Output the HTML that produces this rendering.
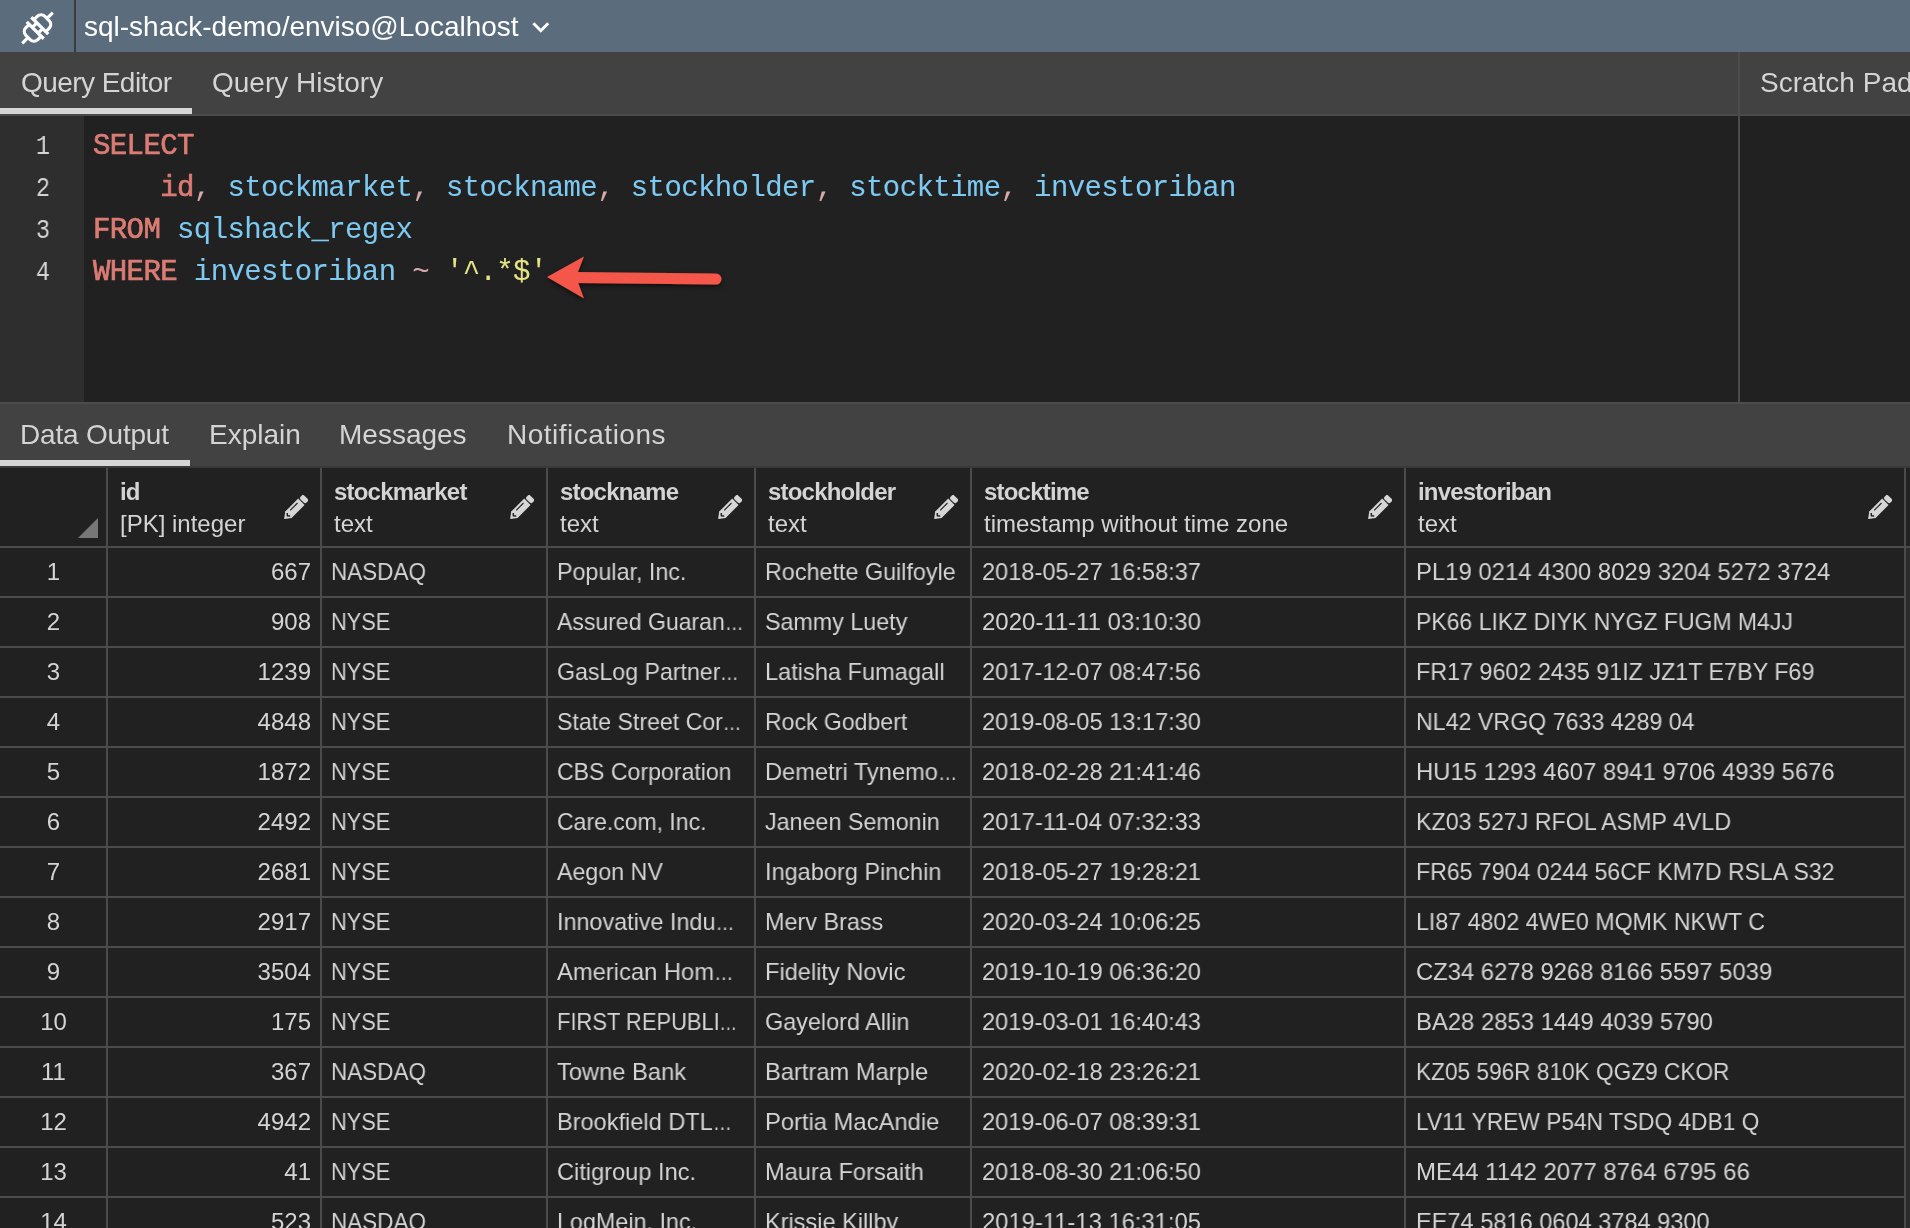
<!DOCTYPE html>
<html><head><meta charset="utf-8">
<style>
*{margin:0;padding:0;box-sizing:border-box}
html,body{width:1910px;height:1228px;overflow:hidden;background:#212121;font-family:"Liberation Sans",sans-serif;color:#d4d4d4}
div{position:absolute}
.t28,.t24,.m28,.m31{will-change:transform}
.t28{font-size:28px;line-height:28px;white-space:pre}
.t24{font-size:24px;line-height:24px;white-space:pre}
.m28{font-family:"Liberation Mono",monospace;font-size:28px;line-height:28px;white-space:pre}
.m31{font-family:"Liberation Mono",monospace;font-size:29px;line-height:29px;letter-spacing:-0.6px;white-space:pre;-webkit-text-stroke:0.05px}
.kw{-webkit-text-stroke:0.7px}
.ell{display:inline-block;transform:scaleX(0.8);transform-origin:0 0}
.kw{color:#db7c74}.vr{color:#7dc9f1}.op{color:#d6aaaa}.st{color:#e4e487}
.hl{height:2px;background:#4b4b4b}
.vl{width:2px;background:#4b4b4b}
.b{font-weight:bold}
</style></head><body>
<div style="left:0;top:0;width:1910px;height:52px;background:#5b6d7c"></div>
<div style="left:74px;top:0;width:2px;height:52px;background:#3d3d3d"></div>
<svg style="position:absolute;left:0;top:0" width="76" height="52" viewBox="0 0 76 52">
<g transform="translate(37.5 28) rotate(-45)" fill="none" stroke="#fff" stroke-width="3.2">
<path d="M3.2,-12 V12 M-3.2,-12 V12 M-3.2,-4.1 H3.2 M-3.2,4.1 H3.2"/>
<path d="M3.2,-8.4 H8 A5.4 5.4 0 0 1 13.4,-3 V3 A5.4 5.4 0 0 1 8,8.4 H3.2"/>
<path d="M-3.2,-8.4 H-8 A5.4 5.4 0 0 0 -13.4,-3 V3 A5.4 5.4 0 0 0 -8,8.4 H-3.2"/>
<path d="M13.5,0 H21.6 M-13.5,0 H-21.6"/>
</g></svg>
<div class="t28" style="left:84px;top:13px;color:#fff">sql-shack-demo/enviso@Localhost</div>
<svg style="position:absolute;left:530px;top:18px" width="22" height="18" viewBox="0 0 22 18"><path d="M3.4,5.3 L10.8,12.7 L18.2,5.3" fill="none" stroke="#fff" stroke-width="2.9"/></svg>
<div style="left:0;top:52px;width:1910px;height:64px;background:#424242"></div>
<div style="left:0;top:114px;width:1910px;height:2px;background:#4a4a4a"></div>
<div style="left:0;top:108px;width:192px;height:6px;background:#d6d6d6"></div>
<div class="t28" style="left:21px;top:69px;letter-spacing:-0.55px">Query Editor</div>
<div class="t28" style="left:212px;top:69px;">Query History</div>
<div class="t28" style="left:1760px;top:69px;">Scratch Pad</div>
<div style="left:0;top:116px;width:84px;height:286px;background:#2e2e2e"></div>
<div style="left:1738px;top:52px;width:2px;height:350px;background:#4c4c4c"></div>
<div class="m28" style="left:0px;top:133px;width:50px;text-align:right;transform:scaleX(0.84);transform-origin:50px 0">1</div>
<div class="m31" style="left:93px;top:132px;"><span class="kw">SELECT</span></div>
<div class="m28" style="left:0px;top:175px;width:50px;text-align:right;transform:scaleX(0.84);transform-origin:50px 0">2</div>
<div class="m31" style="left:93px;top:174px;">    <span class="kw">id</span><span class="op">,</span> <span class="vr">stockmarket</span><span class="op">,</span> <span class="vr">stockname</span><span class="op">,</span> <span class="vr">stockholder</span><span class="op">,</span> <span class="vr">stocktime</span><span class="op">,</span> <span class="vr">investoriban</span></div>
<div class="m28" style="left:0px;top:217px;width:50px;text-align:right;transform:scaleX(0.84);transform-origin:50px 0">3</div>
<div class="m31" style="left:93px;top:216px;"><span class="kw">FROM</span> <span class="vr">sqlshack_regex</span></div>
<div class="m28" style="left:0px;top:259px;width:50px;text-align:right;transform:scaleX(0.84);transform-origin:50px 0">4</div>
<div class="m31" style="left:93px;top:258px;"><span class="kw">WHERE</span> <span class="vr">investoriban</span> <span class="op">~</span> <span class="st">'^.*$'</span></div>
<svg style="position:absolute;left:530px;top:240px" width="220" height="80" viewBox="0 0 220 80">
<defs><filter id="sh" x="-20%" y="-50%" width="140%" height="200%"><feDropShadow dx="0" dy="2" stdDeviation="2" flood-color="#000" flood-opacity="0.6"/></filter></defs>
<g filter="url(#sh)">
<path d="M46,37.5 L186,39" stroke="#f4574a" stroke-width="11" stroke-linecap="round" fill="none"/>
<path d="M17,37 L54,16.5 L46,37 L54,58.5 Z" fill="#f4574a"/>
</g></svg>
<div style="left:0;top:402px;width:1910px;height:66px;background:#424242"></div>
<div style="left:0;top:402px;width:1910px;height:2px;background:#4c4c4c"></div>
<div style="left:0;top:466px;width:1910px;height:2px;background:#3a3a3a"></div>
<div style="left:0;top:460px;width:190px;height:6px;background:#d6d6d6"></div>
<div class="t28" style="left:20px;top:421px;letter-spacing:-0.2px">Data Output</div>
<div class="t28" style="left:209px;top:421px;letter-spacing:0px">Explain</div>
<div class="t28" style="left:339px;top:421px;letter-spacing:0px">Messages</div>
<div class="t28" style="left:507px;top:421px;letter-spacing:0.5px">Notifications</div>
<div class="vl" style="left:106px;top:468px;height:760px"></div>
<div class="vl" style="left:320px;top:468px;height:760px"></div>
<div class="vl" style="left:546px;top:468px;height:760px"></div>
<div class="vl" style="left:754px;top:468px;height:760px"></div>
<div class="vl" style="left:970px;top:468px;height:760px"></div>
<div class="vl" style="left:1404px;top:468px;height:760px"></div>
<div class="vl" style="left:1904px;top:468px;height:760px"></div>
<div style="left:1906px;top:548px;width:4px;height:680px;background:#2b2b2b"></div>
<div class="hl" style="left:0;top:546px;width:1910px"></div>
<div class="hl" style="left:0;top:596px;width:1906px"></div>
<div class="hl" style="left:0;top:646px;width:1906px"></div>
<div class="hl" style="left:0;top:696px;width:1906px"></div>
<div class="hl" style="left:0;top:746px;width:1906px"></div>
<div class="hl" style="left:0;top:796px;width:1906px"></div>
<div class="hl" style="left:0;top:846px;width:1906px"></div>
<div class="hl" style="left:0;top:896px;width:1906px"></div>
<div class="hl" style="left:0;top:946px;width:1906px"></div>
<div class="hl" style="left:0;top:996px;width:1906px"></div>
<div class="hl" style="left:0;top:1046px;width:1906px"></div>
<div class="hl" style="left:0;top:1096px;width:1906px"></div>
<div class="hl" style="left:0;top:1146px;width:1906px"></div>
<div class="hl" style="left:0;top:1196px;width:1906px"></div>
<div class="hl" style="left:0;top:1246px;width:1906px"></div>
<svg style="position:absolute;left:76px;top:516px" width="24" height="24"><path d="M2,22 L22,2 L22,22 Z" fill="#777"/></svg>
<div class="t24 b" style="left:120px;top:480px;letter-spacing:-0.8px">id</div>
<div class="t24" style="left:120px;top:512px;">[PK] integer</div>
<svg style="position:absolute;left:284px;top:495px" width="24" height="24" viewBox="0 0 24 24"><g transform="rotate(-45)"><path d="M7.5,12.6 V21.6 H-10.9 L-16.9,17.1 L-10.9,12.6 Z" fill="#d6d6d6"/><rect x="8.6" y="12.9" width="5.4" height="8.4" rx="2" fill="#d6d6d6"/><path d="M-6.5,15.2 H3.9" stroke="#212121" stroke-width="1.1"/><path d="M-10.4,15 L-12.3,17.1 L-10.4,19.2" stroke="#212121" stroke-width="1.5" fill="none"/></g></svg>
<div class="t24 b" style="left:334px;top:480px;letter-spacing:-0.8px">stockmarket</div>
<div class="t24" style="left:334px;top:512px;">text</div>
<svg style="position:absolute;left:510px;top:495px" width="24" height="24" viewBox="0 0 24 24"><g transform="rotate(-45)"><path d="M7.5,12.6 V21.6 H-10.9 L-16.9,17.1 L-10.9,12.6 Z" fill="#d6d6d6"/><rect x="8.6" y="12.9" width="5.4" height="8.4" rx="2" fill="#d6d6d6"/><path d="M-6.5,15.2 H3.9" stroke="#212121" stroke-width="1.1"/><path d="M-10.4,15 L-12.3,17.1 L-10.4,19.2" stroke="#212121" stroke-width="1.5" fill="none"/></g></svg>
<div class="t24 b" style="left:560px;top:480px;letter-spacing:-0.8px">stockname</div>
<div class="t24" style="left:560px;top:512px;">text</div>
<svg style="position:absolute;left:718px;top:495px" width="24" height="24" viewBox="0 0 24 24"><g transform="rotate(-45)"><path d="M7.5,12.6 V21.6 H-10.9 L-16.9,17.1 L-10.9,12.6 Z" fill="#d6d6d6"/><rect x="8.6" y="12.9" width="5.4" height="8.4" rx="2" fill="#d6d6d6"/><path d="M-6.5,15.2 H3.9" stroke="#212121" stroke-width="1.1"/><path d="M-10.4,15 L-12.3,17.1 L-10.4,19.2" stroke="#212121" stroke-width="1.5" fill="none"/></g></svg>
<div class="t24 b" style="left:768px;top:480px;letter-spacing:-0.8px">stockholder</div>
<div class="t24" style="left:768px;top:512px;">text</div>
<svg style="position:absolute;left:934px;top:495px" width="24" height="24" viewBox="0 0 24 24"><g transform="rotate(-45)"><path d="M7.5,12.6 V21.6 H-10.9 L-16.9,17.1 L-10.9,12.6 Z" fill="#d6d6d6"/><rect x="8.6" y="12.9" width="5.4" height="8.4" rx="2" fill="#d6d6d6"/><path d="M-6.5,15.2 H3.9" stroke="#212121" stroke-width="1.1"/><path d="M-10.4,15 L-12.3,17.1 L-10.4,19.2" stroke="#212121" stroke-width="1.5" fill="none"/></g></svg>
<div class="t24 b" style="left:984px;top:480px;letter-spacing:-0.8px">stocktime</div>
<div class="t24" style="left:984px;top:512px;">timestamp without time zone</div>
<svg style="position:absolute;left:1368px;top:495px" width="24" height="24" viewBox="0 0 24 24"><g transform="rotate(-45)"><path d="M7.5,12.6 V21.6 H-10.9 L-16.9,17.1 L-10.9,12.6 Z" fill="#d6d6d6"/><rect x="8.6" y="12.9" width="5.4" height="8.4" rx="2" fill="#d6d6d6"/><path d="M-6.5,15.2 H3.9" stroke="#212121" stroke-width="1.1"/><path d="M-10.4,15 L-12.3,17.1 L-10.4,19.2" stroke="#212121" stroke-width="1.5" fill="none"/></g></svg>
<div class="t24 b" style="left:1418px;top:480px;letter-spacing:-0.8px">investoriban</div>
<div class="t24" style="left:1418px;top:512px;">text</div>
<svg style="position:absolute;left:1868px;top:495px" width="24" height="24" viewBox="0 0 24 24"><g transform="rotate(-45)"><path d="M7.5,12.6 V21.6 H-10.9 L-16.9,17.1 L-10.9,12.6 Z" fill="#d6d6d6"/><rect x="8.6" y="12.9" width="5.4" height="8.4" rx="2" fill="#d6d6d6"/><path d="M-6.5,15.2 H3.9" stroke="#212121" stroke-width="1.1"/><path d="M-10.4,15 L-12.3,17.1 L-10.4,19.2" stroke="#212121" stroke-width="1.5" fill="none"/></g></svg>
<div class="t24" style="left:0px;top:560px;width:107px;text-align:center">1</div>
<div class="t24" style="left:108px;top:560px;width:203px;text-align:right">667</div>
<div class="t24" style="left:331px;top:560px;transform:scaleX(0.9367);transform-origin:0 0">NASDAQ</div>
<div class="t24" style="left:557px;top:560px;transform:scaleX(0.9696);transform-origin:0 0">Popular, Inc.</div>
<div class="t24" style="left:765px;top:560px;transform:scaleX(0.9724);transform-origin:0 0">Rochette Guilfoyle</div>
<div class="t24" style="left:982px;top:560px;transform:scaleX(0.9823);transform-origin:0 0">2018-05-27 16:58:37</div>
<div class="t24" style="left:1416px;top:560px;transform:scaleX(0.9949);transform-origin:0 0">PL19 0214 4300 8029 3204 5272 3724</div>
<div class="t24" style="left:0px;top:610px;width:107px;text-align:center">2</div>
<div class="t24" style="left:108px;top:610px;width:203px;text-align:right">908</div>
<div class="t24" style="left:331px;top:610px;transform:scaleX(0.9092);transform-origin:0 0">NYSE</div>
<div class="t24" style="left:557px;top:610px;transform:scaleX(0.9600);transform-origin:0 0">Assured Guaran<span class="ell">…</span></div>
<div class="t24" style="left:765px;top:610px;transform:scaleX(0.9696);transform-origin:0 0">Sammy Luety</div>
<div class="t24" style="left:982px;top:610px;transform:scaleX(0.9983);transform-origin:0 0">2020-11-11 03:10:30</div>
<div class="t24" style="left:1416px;top:610px;transform:scaleX(0.9579);transform-origin:0 0">PK66 LIKZ DIYK NYGZ FUGM M4JJ</div>
<div class="t24" style="left:0px;top:660px;width:107px;text-align:center">3</div>
<div class="t24" style="left:108px;top:660px;width:203px;text-align:right">1239</div>
<div class="t24" style="left:331px;top:660px;transform:scaleX(0.9092);transform-origin:0 0">NYSE</div>
<div class="t24" style="left:557px;top:660px;transform:scaleX(0.9645);transform-origin:0 0">GasLog Partner<span class="ell">…</span></div>
<div class="t24" style="left:765px;top:660px;transform:scaleX(0.9826);transform-origin:0 0">Latisha Fumagall</div>
<div class="t24" style="left:982px;top:660px;transform:scaleX(0.9823);transform-origin:0 0">2017-12-07 08:47:56</div>
<div class="t24" style="left:1416px;top:660px;transform:scaleX(0.9716);transform-origin:0 0">FR17 9602 2435 91IZ JZ1T E7BY F69</div>
<div class="t24" style="left:0px;top:710px;width:107px;text-align:center">4</div>
<div class="t24" style="left:108px;top:710px;width:203px;text-align:right">4848</div>
<div class="t24" style="left:331px;top:710px;transform:scaleX(0.9092);transform-origin:0 0">NYSE</div>
<div class="t24" style="left:557px;top:710px;transform:scaleX(0.9638);transform-origin:0 0">State Street Cor<span class="ell">…</span></div>
<div class="t24" style="left:765px;top:710px;transform:scaleX(0.9605);transform-origin:0 0">Rock Godbert</div>
<div class="t24" style="left:982px;top:710px;transform:scaleX(0.9823);transform-origin:0 0">2019-08-05 13:17:30</div>
<div class="t24" style="left:1416px;top:710px;transform:scaleX(0.9666);transform-origin:0 0">NL42 VRGQ 7633 4289 04</div>
<div class="t24" style="left:0px;top:760px;width:107px;text-align:center">5</div>
<div class="t24" style="left:108px;top:760px;width:203px;text-align:right">1872</div>
<div class="t24" style="left:331px;top:760px;transform:scaleX(0.9092);transform-origin:0 0">NYSE</div>
<div class="t24" style="left:557px;top:760px;transform:scaleX(0.9619);transform-origin:0 0">CBS Corporation</div>
<div class="t24" style="left:765px;top:760px;transform:scaleX(0.9845);transform-origin:0 0">Demetri Tynemo<span class="ell">…</span></div>
<div class="t24" style="left:982px;top:760px;transform:scaleX(0.9823);transform-origin:0 0">2018-02-28 21:41:46</div>
<div class="t24" style="left:1416px;top:760px;transform:scaleX(0.9929);transform-origin:0 0">HU15 1293 4607 8941 9706 4939 5676</div>
<div class="t24" style="left:0px;top:810px;width:107px;text-align:center">6</div>
<div class="t24" style="left:108px;top:810px;width:203px;text-align:right">2492</div>
<div class="t24" style="left:331px;top:810px;transform:scaleX(0.9092);transform-origin:0 0">NYSE</div>
<div class="t24" style="left:557px;top:810px;transform:scaleX(0.9576);transform-origin:0 0">Care.com, Inc.</div>
<div class="t24" style="left:765px;top:810px;transform:scaleX(0.9699);transform-origin:0 0">Janeen Semonin</div>
<div class="t24" style="left:982px;top:810px;transform:scaleX(0.9902);transform-origin:0 0">2017-11-04 07:32:33</div>
<div class="t24" style="left:1416px;top:810px;transform:scaleX(0.9679);transform-origin:0 0">KZ03 527J RFOL ASMP 4VLD</div>
<div class="t24" style="left:0px;top:860px;width:107px;text-align:center">7</div>
<div class="t24" style="left:108px;top:860px;width:203px;text-align:right">2681</div>
<div class="t24" style="left:331px;top:860px;transform:scaleX(0.9092);transform-origin:0 0">NYSE</div>
<div class="t24" style="left:557px;top:860px;transform:scaleX(0.9672);transform-origin:0 0">Aegon NV</div>
<div class="t24" style="left:765px;top:860px;transform:scaleX(0.9795);transform-origin:0 0">Ingaborg Pinchin</div>
<div class="t24" style="left:982px;top:860px;transform:scaleX(0.9823);transform-origin:0 0">2018-05-27 19:28:21</div>
<div class="t24" style="left:1416px;top:860px;transform:scaleX(0.9623);transform-origin:0 0">FR65 7904 0244 56CF KM7D RSLA S32</div>
<div class="t24" style="left:0px;top:910px;width:107px;text-align:center">8</div>
<div class="t24" style="left:108px;top:910px;width:203px;text-align:right">2917</div>
<div class="t24" style="left:331px;top:910px;transform:scaleX(0.9092);transform-origin:0 0">NYSE</div>
<div class="t24" style="left:557px;top:910px;transform:scaleX(0.9734);transform-origin:0 0">Innovative Indu<span class="ell">…</span></div>
<div class="t24" style="left:765px;top:910px;transform:scaleX(0.9750);transform-origin:0 0">Merv Brass</div>
<div class="t24" style="left:982px;top:910px;transform:scaleX(0.9823);transform-origin:0 0">2020-03-24 10:06:25</div>
<div class="t24" style="left:1416px;top:910px;transform:scaleX(0.9665);transform-origin:0 0">LI87 4802 4WE0 MQMK NKWT C</div>
<div class="t24" style="left:0px;top:960px;width:107px;text-align:center">9</div>
<div class="t24" style="left:108px;top:960px;width:203px;text-align:right">3504</div>
<div class="t24" style="left:331px;top:960px;transform:scaleX(0.9092);transform-origin:0 0">NYSE</div>
<div class="t24" style="left:557px;top:960px;transform:scaleX(0.9895);transform-origin:0 0">American Hom<span class="ell">…</span></div>
<div class="t24" style="left:765px;top:960px;transform:scaleX(0.9840);transform-origin:0 0">Fidelity Novic</div>
<div class="t24" style="left:982px;top:960px;transform:scaleX(0.9823);transform-origin:0 0">2019-10-19 06:36:20</div>
<div class="t24" style="left:1416px;top:960px;transform:scaleX(0.9922);transform-origin:0 0">CZ34 6278 9268 8166 5597 5039</div>
<div class="t24" style="left:0px;top:1010px;width:107px;text-align:center">10</div>
<div class="t24" style="left:108px;top:1010px;width:203px;text-align:right">175</div>
<div class="t24" style="left:331px;top:1010px;transform:scaleX(0.9092);transform-origin:0 0">NYSE</div>
<div class="t24" style="left:557px;top:1010px;transform:scaleX(0.9130);transform-origin:0 0">FIRST REPUBLI<span class="ell">…</span></div>
<div class="t24" style="left:765px;top:1010px;transform:scaleX(0.9749);transform-origin:0 0">Gayelord Allin</div>
<div class="t24" style="left:982px;top:1010px;transform:scaleX(0.9823);transform-origin:0 0">2019-03-01 16:40:43</div>
<div class="t24" style="left:1416px;top:1010px;transform:scaleX(0.9933);transform-origin:0 0">BA28 2853 1449 4039 5790</div>
<div class="t24" style="left:0px;top:1060px;width:107px;text-align:center">11</div>
<div class="t24" style="left:108px;top:1060px;width:203px;text-align:right">367</div>
<div class="t24" style="left:331px;top:1060px;transform:scaleX(0.9367);transform-origin:0 0">NASDAQ</div>
<div class="t24" style="left:557px;top:1060px;transform:scaleX(0.9870);transform-origin:0 0">Towne Bank</div>
<div class="t24" style="left:765px;top:1060px;transform:scaleX(0.9871);transform-origin:0 0">Bartram Marple</div>
<div class="t24" style="left:982px;top:1060px;transform:scaleX(0.9823);transform-origin:0 0">2020-02-18 23:26:21</div>
<div class="t24" style="left:1416px;top:1060px;transform:scaleX(0.9436);transform-origin:0 0">KZ05 596R 810K QGZ9 CKOR</div>
<div class="t24" style="left:0px;top:1110px;width:107px;text-align:center">12</div>
<div class="t24" style="left:108px;top:1110px;width:203px;text-align:right">4942</div>
<div class="t24" style="left:331px;top:1110px;transform:scaleX(0.9092);transform-origin:0 0">NYSE</div>
<div class="t24" style="left:557px;top:1110px;transform:scaleX(0.9808);transform-origin:0 0">Brookfield DTL<span class="ell">…</span></div>
<div class="t24" style="left:765px;top:1110px;transform:scaleX(0.9898);transform-origin:0 0">Portia MacAndie</div>
<div class="t24" style="left:982px;top:1110px;transform:scaleX(0.9823);transform-origin:0 0">2019-06-07 08:39:31</div>
<div class="t24" style="left:1416px;top:1110px;transform:scaleX(0.9474);transform-origin:0 0">LV11 YREW P54N TSDQ 4DB1 Q</div>
<div class="t24" style="left:0px;top:1160px;width:107px;text-align:center">13</div>
<div class="t24" style="left:108px;top:1160px;width:203px;text-align:right">41</div>
<div class="t24" style="left:331px;top:1160px;transform:scaleX(0.9092);transform-origin:0 0">NYSE</div>
<div class="t24" style="left:557px;top:1160px;transform:scaleX(0.9830);transform-origin:0 0">Citigroup Inc.</div>
<div class="t24" style="left:765px;top:1160px;transform:scaleX(0.9842);transform-origin:0 0">Maura Forsaith</div>
<div class="t24" style="left:982px;top:1160px;transform:scaleX(0.9823);transform-origin:0 0">2018-08-30 21:06:50</div>
<div class="t24" style="left:1416px;top:1160px;transform:scaleX(0.9980);transform-origin:0 0">ME44 1142 2077 8764 6795 66</div>
<div class="t24" style="left:0px;top:1210px;width:107px;text-align:center">14</div>
<div class="t24" style="left:108px;top:1210px;width:203px;text-align:right">523</div>
<div class="t24" style="left:331px;top:1210px;transform:scaleX(0.9367);transform-origin:0 0">NASDAQ</div>
<div class="t24" style="left:557px;top:1210px;transform:scaleX(0.9719);transform-origin:0 0">LogMein, Inc.</div>
<div class="t24" style="left:765px;top:1210px;transform:scaleX(0.9795);transform-origin:0 0">Krissie Killby</div>
<div class="t24" style="left:982px;top:1210px;transform:scaleX(0.9902);transform-origin:0 0">2019-11-13 16:31:05</div>
<div class="t24" style="left:1416px;top:1210px;transform:scaleX(0.9822);transform-origin:0 0">EE74 5816 0604 3784 9300</div>
</body></html>
